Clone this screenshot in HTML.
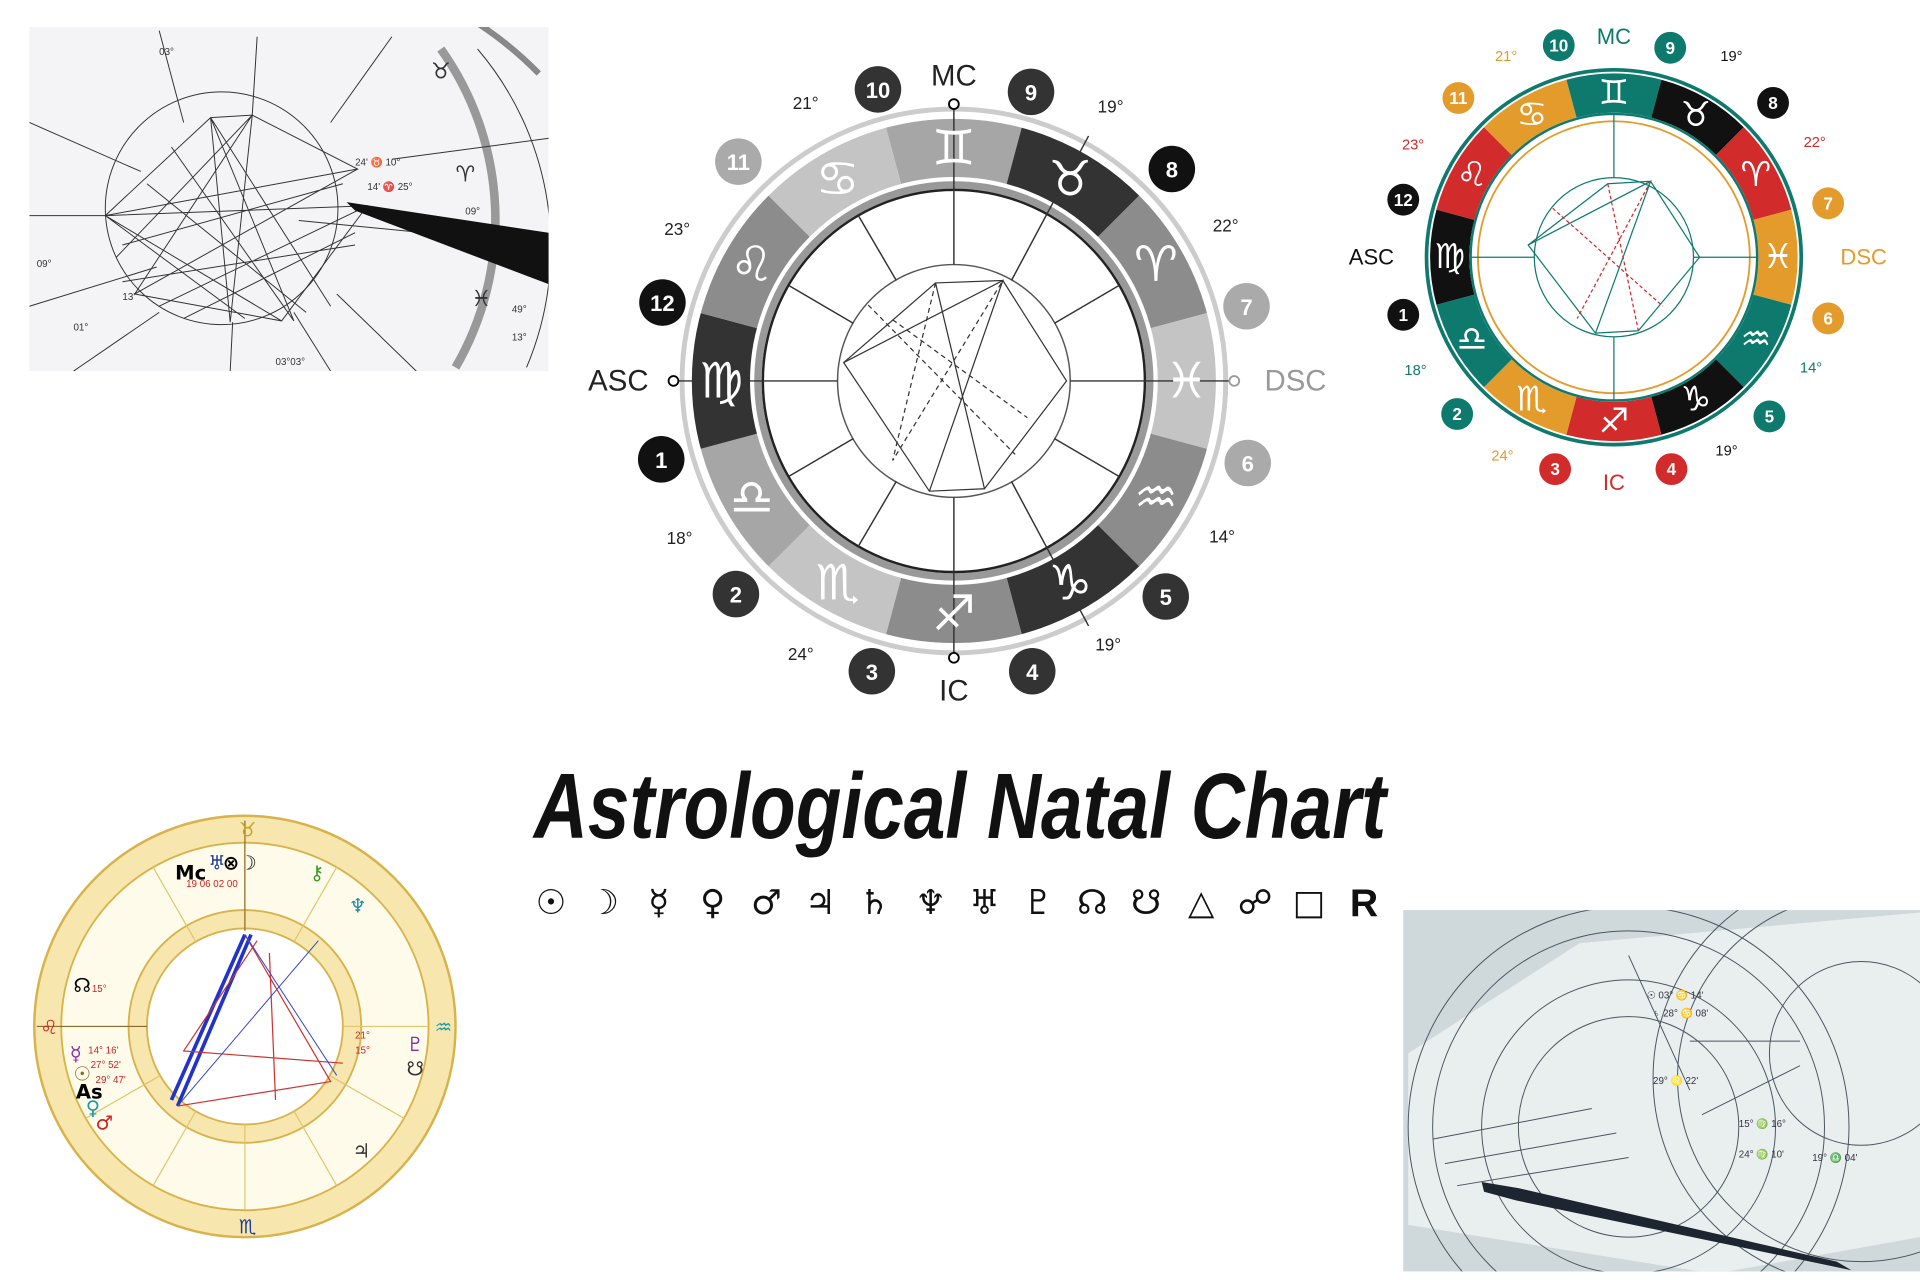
<!DOCTYPE html>
<html><head><meta charset="utf-8"><style>
html,body{margin:0;padding:0;background:#fff;width:1920px;height:1280px;overflow:hidden}
svg{display:block;overflow:hidden}
.g{font-family:"DejaVu Sans",sans-serif}
.l{font-family:"Liberation Sans",sans-serif}
</style></head><body>
<svg width="1920" height="1280" viewBox="0 0 1568 1045" preserveAspectRatio="none" xmlns="http://www.w3.org/2000/svg">
<!-- top-left photo -->
<g>
<rect x="24" y="22" width="424" height="281" fill="#f4f4f6"/>
<clipPath id="c1"><rect x="24" y="22" width="424" height="281"/></clipPath>
<g clip-path="url(#c1)" stroke="#333" fill="none" stroke-width="0.8">
<path d="M60 20 A300 300 0 0 1 440 60" stroke-width="5" stroke="#888"/>
<path d="M360 40 A240 240 0 0 1 372 300" stroke-width="7" stroke="#999"/>
<path d="M390 40 A250 250 0 0 1 430 300"/>
<circle cx="181" cy="170" r="95"/>
<line x1="24" y1="176" x2="86" y2="176"/><line x1="244" y1="180" x2="448" y2="200"/>
<line x1="24" y1="250" x2="128" y2="218"/><line x1="320" y1="130" x2="470" y2="110"/>
<line x1="210" y1="30" x2="206" y2="94"/><line x1="190" y1="263" x2="188" y2="303"/>
<line x1="130" y1="25" x2="150" y2="100"/><line x1="275" y1="240" x2="340" y2="303"/>
<line x1="60" y1="303" x2="130" y2="255"/><line x1="270" y1="100" x2="320" y2="30"/>
<line x1="24" y1="100" x2="115" y2="140"/><line x1="240" y1="255" x2="270" y2="303"/>
<path d="M86 176 L172 96 L206 94 L292 138 L86 176 L300 168 L230 262 L110 240 L206 94 L188 263 L172 96 L240 262 M86 176 L230 262 M110 240 L292 138 M130 250 L300 168 M100 200 L280 150 M120 150 L250 255 M150 260 L290 190 M95 210 L206 94 M172 96 L270 250 M110 240 L292 138 M86 176 L200 260 M140 120 L240 262 M100 230 L290 200"/>
</g>
<path d="M283 165 L448 190 L448 232 L290 172 Z" fill="#111"/>
<g class="l" font-size="8" fill="#333"><text x="380" y="175">09°</text><text x="418" y="255">49°</text><text x="418" y="278">13°</text><text x="30" y="218">09°</text><text x="100" y="245">13'</text><text x="60" y="270">01°</text><text x="225" y="298">03°03°</text><text x="290" y="135">24' ♉ 10°</text><text x="300" y="155">14' ♈ 25°</text><text x="130" y="45">03°</text></g>
<g class="g" font-size="18" fill="#333"><text x="372" y="148">♈</text><text x="352" y="64">♉</text><text x="385" y="250">♓</text></g>
</g>

<!-- center chart -->
<g transform="translate(779,311)">
<circle r="222" fill="none" stroke="#ccc" stroke-width="4"/>
<g fill="none" stroke-width="50">
<circle r="190" stroke="#a6a6a6" stroke-dasharray="99.48 1200" transform="rotate(-105)"/>
<circle r="190" stroke="#333" stroke-dasharray="99.48 1200" transform="rotate(-75)"/>
<circle r="190" stroke="#8c8c8c" stroke-dasharray="99.48 1200" transform="rotate(-45)"/>
<circle r="190" stroke="#c4c4c4" stroke-dasharray="99.48 1200" transform="rotate(-15)"/>
<circle r="190" stroke="#8c8c8c" stroke-dasharray="99.48 1200" transform="rotate(15)"/>
<circle r="190" stroke="#333" stroke-dasharray="99.48 1200" transform="rotate(45)"/>
<circle r="190" stroke="#8c8c8c" stroke-dasharray="99.48 1200" transform="rotate(75)"/>
<circle r="190" stroke="#c4c4c4" stroke-dasharray="99.48 1200" transform="rotate(105)"/>
<circle r="190" stroke="#a6a6a6" stroke-dasharray="99.48 1200" transform="rotate(135)"/>
<circle r="190" stroke="#333" stroke-dasharray="99.48 1200" transform="rotate(165)"/>
<circle r="190" stroke="#8c8c8c" stroke-dasharray="99.48 1200" transform="rotate(195)"/>
<circle r="190" stroke="#c4c4c4" stroke-dasharray="99.48 1200" transform="rotate(225)"/>
</g>
<circle r="215" fill="none" stroke="#fff" stroke-width="2"/>
<circle r="165" fill="none" stroke="#fff" stroke-width="3"/>
<circle r="160" fill="none" stroke="#999" stroke-width="6"/>
<circle r="156" fill="#fff" stroke="#222" stroke-width="2"/>
<circle r="95" fill="none" stroke="#555" stroke-width="1.2"/>
<g stroke="#333" stroke-width="1.2">
<line x1="-225" y1="0" x2="-95" y2="0"/><line x1="95" y1="0" x2="225" y2="0"/>
<line x1="0" y1="-225" x2="0" y2="-95"/><line x1="0" y1="95" x2="0" y2="225"/>
<line x1="-82" y1="-47" x2="-135" y2="-78"/><line x1="-47" y1="-82" x2="-78" y2="-135"/>
<line x1="47" y1="-82" x2="110" y2="-200"/><line x1="82" y1="-47" x2="135" y2="-78"/>
<line x1="82" y1="47" x2="135" y2="78"/><line x1="47" y1="82" x2="110" y2="200"/>
<line x1="-47" y1="82" x2="-78" y2="135"/><line x1="-82" y1="47" x2="-135" y2="78"/>
</g>
<g stroke="#333" stroke-width="1" fill="none">
<path d="M-90 -15 L-15 -80 L40 -82 L92 0 L25 88 L-20 90 L-90 -15 Z"/>
<path d="M-90 -15 L40 -82 L-20 90 M-15 -80 L25 88"/>
<path d="M-70 -62 L50 60 M-50 -50 L60 30" stroke-dasharray="4 3"/>
<path d="M-15 -80 L-50 65 L40 -82" stroke-dasharray="4 3"/>
</g>
<g class="g" font-size="40" fill="#fff" text-anchor="middle" dominant-baseline="central">
<text x="0" y="-190">♊&#xFE0E;</text><text x="95" y="-165">♉&#xFE0E;</text><text x="165" y="-95">♈&#xFE0E;</text>
<text x="190" y="0">♓&#xFE0E;</text><text x="165" y="95">♒&#xFE0E;</text><text x="95" y="165">♑&#xFE0E;</text>
<text x="0" y="190">♐&#xFE0E;</text><text x="-95" y="165">♏&#xFE0E;</text><text x="-165" y="95">♎&#xFE0E;</text>
<text x="-190" y="0">♍&#xFE0E;</text><text x="-165" y="-95">♌&#xFE0E;</text><text x="-95" y="-165">♋&#xFE0E;</text>
</g>
<g fill="#fff" stroke="#000" stroke-width="1.5"><circle cx="0" cy="-226" r="4"/><circle cx="0" cy="226" r="4"/><circle cx="-229" cy="0" r="4"/><circle cx="229" cy="0" r="4" stroke="#999"/></g>
</g>
<g class="l" font-size="24" fill="#222" text-anchor="middle">
<text x="779" y="70">MC</text><text x="779" y="572">IC</text><text x="505" y="319">ASC</text><text x="1058" y="319" fill="#999">DSC</text>
</g>
<g class="l" font-size="14" fill="#222" text-anchor="middle">
<text x="658" y="89">21°</text><text x="907" y="92">19°</text><text x="553" y="192">23°</text><text x="1001" y="189">22°</text>
<text x="555" y="444">18°</text><text x="998" y="443">14°</text><text x="654" y="539">24°</text><text x="905" y="531">19°</text>
</g>
<g class="l" font-size="18" fill="#fff" text-anchor="middle" font-weight="bold">
<circle cx="717" cy="73" r="19" fill="#333"/><text x="717" y="80">10</text>
<circle cx="842" cy="75" r="19" fill="#333"/><text x="842" y="82">9</text>
<circle cx="957" cy="138" r="19" fill="#111"/><text x="957" y="145">8</text>
<circle cx="1018" cy="250" r="19" fill="#aaa"/><text x="1018" y="257">7</text>
<circle cx="1019" cy="378" r="19" fill="#aaa"/><text x="1019" y="385">6</text>
<circle cx="952" cy="487" r="19" fill="#333"/><text x="952" y="494">5</text>
<circle cx="843" cy="548" r="19" fill="#333"/><text x="843" y="555">4</text>
<circle cx="712" cy="548" r="19" fill="#333"/><text x="712" y="555">3</text>
<circle cx="601" cy="485" r="19" fill="#333"/><text x="601" y="492">2</text>
<circle cx="540" cy="375" r="19" fill="#111"/><text x="540" y="382">1</text>
<circle cx="541" cy="247" r="19" fill="#111"/><text x="541" y="254">12</text>
<circle cx="603" cy="132" r="19" fill="#aaa"/><text x="603" y="139">11</text>
</g>

<!-- right color chart -->
<g transform="translate(1318,210)">
<circle r="153" fill="none" stroke="#0e7a6e" stroke-width="3"/>
<g fill="none" stroke-width="32">
<circle r="134" stroke="#0e7a6e" stroke-dasharray="70.16 900" transform="rotate(-105)"/>
<circle r="134" stroke="#111" stroke-dasharray="70.16 900" transform="rotate(-75)"/>
<circle r="134" stroke="#d22b2b" stroke-dasharray="70.16 900" transform="rotate(-45)"/>
<circle r="134" stroke="#e39b2c" stroke-dasharray="70.16 900" transform="rotate(-15)"/>
<circle r="134" stroke="#0e7a6e" stroke-dasharray="70.16 900" transform="rotate(15)"/>
<circle r="134" stroke="#111" stroke-dasharray="70.16 900" transform="rotate(45)"/>
<circle r="134" stroke="#d22b2b" stroke-dasharray="70.16 900" transform="rotate(75)"/>
<circle r="134" stroke="#e39b2c" stroke-dasharray="70.16 900" transform="rotate(105)"/>
<circle r="134" stroke="#0e7a6e" stroke-dasharray="70.16 900" transform="rotate(135)"/>
<circle r="134" stroke="#111" stroke-dasharray="70.16 900" transform="rotate(165)"/>
<circle r="134" stroke="#d22b2b" stroke-dasharray="70.16 900" transform="rotate(195)"/>
<circle r="134" stroke="#e39b2c" stroke-dasharray="70.16 900" transform="rotate(225)"/>
</g>
<circle r="117" fill="#fff" stroke="#0e7a6e" stroke-width="2"/>
<circle r="111" fill="none" stroke="#e39b2c" stroke-width="1.5"/>
<circle r="65" fill="none" stroke="#0e7a6e" stroke-width="1"/>
<g stroke="#0e7a6e" stroke-width="1" fill="none">
<line x1="-117" y1="0" x2="-65" y2="0"/><line x1="65" y1="0" x2="117" y2="0"/><line x1="0" y1="-117" x2="0" y2="-65"/><line x1="0" y1="65" x2="0" y2="117"/>
<path d="M-70 -10 L-5 -60 L30 -62 L70 0 L20 60 L-15 62 Z M-70 -10 L30 -62 L-15 62"/>
</g>
<g stroke="#d22b2b" stroke-width="1" fill="none" stroke-dasharray="3 2"><path d="M-5 -60 L20 60 M-50 -40 L40 40 M30 -62 L-30 50"/></g>
<g class="g" font-size="28" fill="#fff" text-anchor="middle" dominant-baseline="central">
<text x="0" y="-134">♊&#xFE0E;</text><text x="67" y="-116">♉&#xFE0E;</text><text x="116" y="-67">♈&#xFE0E;</text>
<text x="134" y="0">♓&#xFE0E;</text><text x="116" y="67">♒&#xFE0E;</text><text x="67" y="116">♑&#xFE0E;</text>
<text x="0" y="134">♐&#xFE0E;</text><text x="-67" y="116">♏&#xFE0E;</text><text x="-116" y="67">♎&#xFE0E;</text>
<text x="-134" y="0">♍&#xFE0E;</text><text x="-116" y="-67">♌&#xFE0E;</text><text x="-67" y="-116">♋&#xFE0E;</text>
</g>
</g>
<g class="l" font-size="18" text-anchor="middle">
<text x="1318" y="36" fill="#0e7a6e">MC</text><text x="1318" y="400" fill="#d22b2b">IC</text>
<text x="1120" y="216" fill="#111">ASC</text><text x="1522" y="216" fill="#e39b2c">DSC</text>
</g>
<g class="l" font-size="12" text-anchor="middle">
<text x="1230" y="50" fill="#e39b2c">21°</text><text x="1414" y="50" fill="#111">19°</text><text x="1154" y="122" fill="#d22b2b">23°</text><text x="1482" y="120" fill="#d22b2b">22°</text>
<text x="1156" y="306" fill="#0e7a6e">18°</text><text x="1479" y="304" fill="#0e7a6e">14°</text><text x="1227" y="376" fill="#e39b2c">24°</text><text x="1410" y="372" fill="#111">19°</text>
</g>
<g class="l" font-size="14" fill="#fff" text-anchor="middle" font-weight="bold">
<circle cx="1273" cy="37" r="13" fill="#0e7a6e"/><text x="1273" y="42">10</text>
<circle cx="1364" cy="39" r="13" fill="#0e7a6e"/><text x="1364" y="44">9</text>
<circle cx="1448" cy="84" r="13" fill="#111"/><text x="1448" y="89">8</text>
<circle cx="1493" cy="166" r="13" fill="#e39b2c"/><text x="1493" y="171">7</text>
<circle cx="1493" cy="260" r="13" fill="#e39b2c"/><text x="1493" y="265">6</text>
<circle cx="1445" cy="340" r="13" fill="#0e7a6e"/><text x="1445" y="345">5</text>
<circle cx="1365" cy="383" r="13" fill="#d22b2b"/><text x="1365" y="388">4</text>
<circle cx="1270" cy="383" r="13" fill="#d22b2b"/><text x="1270" y="388">3</text>
<circle cx="1190" cy="338" r="13" fill="#0e7a6e"/><text x="1190" y="343">2</text>
<circle cx="1146" cy="257" r="13" fill="#111"/><text x="1146" y="262">1</text>
<circle cx="1146" cy="163" r="13" fill="#111"/><text x="1146" y="168">12</text>
<circle cx="1191" cy="80" r="13" fill="#e39b2c"/><text x="1191" y="85">11</text>
</g>

<!-- bottom-left chart -->
<g transform="translate(200,838)">
<circle r="172" fill="#f7e6ad" stroke="#d8b24a" stroke-width="2"/>
<circle r="150" fill="#fffbea" stroke="#d8b24a" stroke-width="1.5"/>
<circle r="95" fill="#f7e6ad" stroke="#d8b24a" stroke-width="1.5"/>
<circle r="80" fill="#fff" stroke="#d8b24a" stroke-width="1.5"/>
<g stroke="#e0c66e" stroke-width="1"><line x1="-150" y1="0" x2="-80" y2="0"/><line x1="80" y1="0" x2="150" y2="0"/><line x1="0" y1="-150" x2="0" y2="-80"/><line x1="0" y1="80" x2="0" y2="150"/><line x1="-75" y1="-130" x2="-40" y2="-69"/><line x1="75" y1="-130" x2="40" y2="-69"/><line x1="-130" y1="75" x2="-69" y2="40"/><line x1="130" y1="75" x2="69" y2="40"/><line x1="75" y1="130" x2="40" y2="69"/><line x1="-75" y1="130" x2="-40" y2="69"/></g>
<path d="M-60 60 L0 -75 M-55 65 L5 -75" stroke="#2233cc" stroke-width="3"/>
<path d="M0 -75 L70 45 L-55 65 M10 -70 L-50 20 L80 30 M20 -60 L25 60" stroke="#cc3333" stroke-width="1" fill="none"/>
<path d="M0 -75 L75 40 M-55 65 L60 -70" stroke="#3344cc" stroke-width="0.8" fill="none"/>
</g>
<line x1="30" y1="838" x2="120" y2="838" stroke="#8a6b2a" stroke-width="1"/>
<line x1="200" y1="670" x2="200" y2="760" stroke="#8a6b2a" stroke-width="1"/>
<g class="g" font-size="16" font-weight="bold">
<text x="143" y="718" fill="#000">Mc</text><text x="170" y="710" fill="#1d3a9a">♅</text><text x="182" y="710" fill="#000">⊗☽</text>
<text x="253" y="718" fill="#3a9a2a">⚷</text><text x="285" y="745" fill="#1a8aaa">♆</text><text x="60" y="810" fill="#000">☊</text>
<text x="57" y="866" fill="#8a2aaa">☿</text><text x="60" y="882" fill="#8a6b2a">☉</text><text x="62" y="897" fill="#000">As</text>
<text x="70" y="910" fill="#1a9aaa">♀</text><text x="78" y="922" fill="#cc2222">♂</text><text x="332" y="858" fill="#8a2aaa">♇</text>
<text x="332" y="878" fill="#333">☋</text><text x="288" y="945" fill="#333">♃</text>
<text x="195" y="683" fill="#c8a22a">♉</text><text x="195" y="1007" fill="#1d3a9a">♏</text><text x="33" y="844" fill="#cc2222">♌</text><text x="355" y="844" fill="#1a9aaa">♒</text>
</g>
<g class="l" font-size="8" fill="#cc2222"><text x="75" y="810">15°</text><text x="72" y="860">14° 16'</text><text x="74" y="872">27° 52'</text><text x="78" y="884">29° 47'</text><text x="290" y="848">21°</text><text x="290" y="860">15°</text><text x="152" y="724">19 06 02 00</text></g>

<!-- bottom-right photo -->
<rect x="1146" y="743" width="422" height="295" fill="#cfd8da"/>
<clipPath id="c2"><rect x="1146" y="743" width="422" height="295"/></clipPath>
<g clip-path="url(#c2)">
<path d="M1150 1000 L1150 860 L1290 770 L1568 745 L1568 1010 L1400 1040 Z" fill="#e9eeee"/>
<g fill="none" stroke="#4a5560" stroke-width="0.8">
<circle cx="1520" cy="880" r="170"/><circle cx="1520" cy="880" r="150"/><circle cx="1520" cy="860" r="75"/>
<circle cx="1330" cy="920" r="180"/><circle cx="1330" cy="920" r="160"/><circle cx="1330" cy="920" r="120"/><circle cx="1330" cy="920" r="90"/>
<line x1="1390" y1="910" x2="1470" y2="870"/><line x1="1380" y1="850" x2="1470" y2="850"/>
<path d="M1170 930 L1300 905 M1180 950 L1320 925 M1190 968 L1330 945 M1330 780 L1380 890"/>
</g>
<g class="l" font-size="8" fill="#334"><text x="1350" y="830">♄ 28° ♋ 08'</text><text x="1345" y="815">☉ 03° ♋ 14'</text><text x="1420" y="920">15° ♍ 16°</text><text x="1480" y="948">19° ♎ 04'</text><text x="1420" y="945">24° ♍ 10'</text><text x="1350" y="885">29° ♌ 22'</text></g>
<path d="M1210 965 L1240 970 L1500 1030 L1512 1037 L1238 980 L1212 973 Z" fill="#1c2530"/>
</g>

<!-- title -->
<text x="784" y="684" text-anchor="middle" class="l" font-size="76" font-weight="bold" font-style="italic" fill="#111" textLength="696" lengthAdjust="spacingAndGlyphs">Astrological Natal Chart</text>
<g class="g" font-size="28" fill="#111" text-anchor="middle" font-weight="bold">
<text x="450" y="746">☉</text><text x="493" y="746">☽</text><text x="538" y="746">☿</text><text x="582" y="746">♀</text>
<text x="626" y="746">♂</text><text x="670" y="746">♃</text><text x="714" y="746">♄</text><text x="760" y="746">♆</text>
<text x="804" y="746">♅</text><text x="848" y="746">♇</text><text x="892" y="746">☊</text><text x="936" y="746">☋</text>
<text x="981" y="746">△</text><text x="1025" y="746">☍</text><text x="1069" y="746">□</text><text x="1114" y="748" class="l" font-size="32">R</text>
</g>
</svg>
</body></html>
